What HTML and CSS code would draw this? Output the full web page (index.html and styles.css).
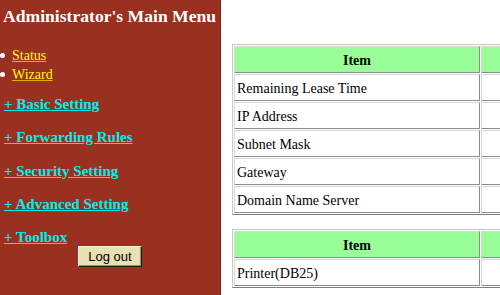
FILE: index.html
```html
<!DOCTYPE html>
<html lang="en">
<head>
<meta charset="utf-8">
<title>Administrator's Main Menu</title>
<link rel="stylesheet" href="styles.css">
</head>
<body>
<nav class="menu">
  <h1 class="menu-title">Administrator's Main Menu</h1>
  <ul class="quick">
    <li><a href="#">Status</a></li>
    <li><a href="#">Wizard</a></li>
  </ul>
  <div class="groups">
    <a class="group" href="#">+ Basic Setting</a>
    <a class="group" href="#">+ Forwarding Rules</a>
    <a class="group" href="#">+ Security Setting</a>
    <a class="group" href="#">+ Advanced Setting</a>
    <a class="group" href="#">+ Toolbox</a>
  </div>
  <div class="logout-row"><button class="logout" type="button">Log out</button></div>
</nav>
<main class="content">
  <table class="info">
    <tr><th class="c-item">Item</th><th class="c-value"></th></tr>
    <tr><td>Remaining Lease Time</td><td></td></tr>
    <tr><td>IP Address</td><td></td></tr>
    <tr><td>Subnet Mask</td><td></td></tr>
    <tr><td>Gateway</td><td></td></tr>
    <tr><td>Domain Name Server</td><td></td></tr>
  </table>
  <table class="info">
    <tr><th class="c-item">Item</th><th class="c-value"></th></tr>
    <tr><td>Printer(DB25)</td><td></td></tr>
  </table>
</main>
</body>
</html>
```
FILE: styles.css
```css
html, body {
  margin: 0;
  height: 100%;
}
body {
  display: flex;
  overflow: hidden;
  background: #ffffff;
  font-family: "Liberation Serif", "Times New Roman", serif;
}

/* left menu frame */
.menu {
  width: 220px;
  flex: none;
  background: #993020;
  border-right: 1px solid #7c2416;
  padding-top: 5px;
}
.menu-title {
  margin: 0 0 0 3px;
  font-size: 17.6px;
  line-height: 22px;
  font-weight: bold;
  color: #ffffff;
  white-space: nowrap;
}
.quick {
  list-style: none;
  margin: 18.5px 0 0;
  padding: 0;
}
.quick li {
  display: flex;
  align-items: center;
  height: 19px;
  line-height: 19px;
  font-size: 14px;
}
.quick li::before {
  content: "";
  width: 5px;
  height: 5px;
  border-radius: 50%;
  background: #ffffff;
  margin: 1px 7px 0 0;
}
.quick a {
  color: #ffff00;
  text-decoration: underline;
  text-decoration-color: #e0b000;
}
.groups {
  margin-top: 11.5px;
  padding-left: 4px;
  display: flex;
  flex-direction: column;
  align-items: flex-start;
  gap: 14.25px;
}
.group {
  font-size: 15px;
  line-height: 19px;
  font-weight: bold;
  color: #00f0f0;
  text-decoration: underline;
  white-space: nowrap;
}
.logout-row {
  margin-top: -1.4px;
  display: flex;
  justify-content: center;
}
.logout {
  width: 64px;
  height: 21px;
  padding: 0;
  font: 13px "Liberation Sans", Arial, sans-serif;
  color: #000000;
  background: #ebdfb4;
  border: 1px solid;
  border-color: #fbf5e2 #1a1a1a #1a1a1a #fbf5e2;
  box-shadow: inset -1px -1px 0 #9c8f6c;
}

/* right content frame */
.content {
  flex: 1;
  min-width: 0;
  overflow: hidden;
  padding: 44px 0 0 11px;
}
.info {
  table-layout: fixed;
  width: 491px;
  border-collapse: separate;
  border-spacing: 1px;
  border: 1px solid;
  border-color: #c8c8c8 #808080 #808080 #c8c8c8;
  margin-bottom: 14px;
}
.info th,
.info td {
  box-sizing: border-box;
  border: 1px solid;
  border-color: #d8d8d8 #8c8c8c #8c8c8c #d8d8d8;
  padding: 5px 2px 3px;
  font-size: 14px;
  line-height: 17px;
  color: #000000;
  white-space: nowrap;
}
.info th {
  background: #99ff99;
  font-weight: bold;
  text-align: center;
}
.info td {
  background: #ffffff;
  text-align: left;
}
.c-item {
  width: 246px;
}
.c-value {
  width: 240px;
}
```
